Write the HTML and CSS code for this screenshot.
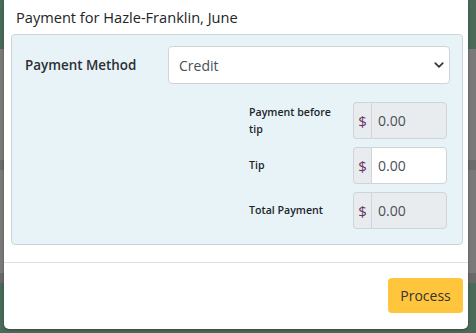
FILE: index.html
```html
<!DOCTYPE html>
<html lang="en">

<head>
    <meta charset="UTF-8">
    <meta name="viewport" content="width=device-width, initial-scale=1.0">
    <title>Payment</title>
    <link rel="stylesheet" href="styles.css">
</head>

<body>
    <div class="modal">
        <div class="modal-header">
            <h5 class="modal-title">Payment for Hazle-Franklin, June</h5>
        </div>
        <div class="modal-body">
            <div class="pay-panel">
                <div class="method-row">
                    <label for="method">Payment Method</label>
                    <div class="select-wrap">
                        <select id="method" class="form-select">
                            <option>Credit</option>
                            <option>Cash</option>
                            <option>Check</option>
                        </select>
                        <svg class="chevron" width="10" height="10" viewBox="0 0 16 16">
                            <path d="M2 5l6 6 6-6" fill="none" stroke="#343a40" stroke-width="2.8" stroke-linecap="round" stroke-linejoin="round" />
                        </svg>
                    </div>
                </div>
                <div class="amounts">
                    <label class="amount-label">Payment before tip</label>
                    <div class="input-group">
                        <span class="addon">$</span>
                        <input type="text" value="0.00" disabled>
                    </div>
                    <label class="amount-label">Tip</label>
                    <div class="input-group">
                        <span class="addon">$</span>
                        <input type="text" value="0.00">
                    </div>
                    <label class="amount-label">Total Payment</label>
                    <div class="input-group">
                        <span class="addon">$</span>
                        <input type="text" value="0.00" disabled>
                    </div>
                </div>
            </div>
        </div>
        <div class="modal-footer">
            <button type="button" class="btn-process">Process</button>
        </div>
    </div>
</body>

</html>
```

FILE: styles.css
```css
body {
    margin: 0;
    padding: 0;
    height: 333px;
    overflow: hidden;
    font-family: "Open Sans", "Noto Sans", sans-serif;
    color: #212529;
    background: linear-gradient(to bottom,
        #4b6b5a 0, #4b6b5a 49px,
        #7a7a7a 49px, #7a7a7a 160px,
        #6c6c6c 160px, #6c6c6c 170px,
        #7a7a7a 170px, #7a7a7a 273px,
        #6a6a6a 273px, #6a6a6a 283px,
        #4b6b5a 283px);
}

.modal {
    margin-left: 4px;
    width: 464px;
    height: 329px;
    background-color: white;
    border-radius: 0 0 5px 5px;
    box-shadow: 0 1px 3px rgba(0, 0, 0, 0.35);
    display: flex;
    flex-direction: column;
}

.modal-header {
    padding: 7px 12px 0 12px;
    height: 27px;
}

.modal-title {
    margin: 0;
    font-size: 14.6px;
    font-weight: 400;
    line-height: 20px;
}

.modal-body {
    padding: 0 5px 0 7px;
    height: 228px;
    border-bottom: 1px solid #dee2e6;
}

.pay-panel {
    background-color: #e8f3f8;
    border: 1px solid #c9d6dc;
    border-radius: 4px;
    padding: 11px 12px 15px 12px;
}

.method-row {
    display: grid;
    grid-template-columns: 144px 1fr;
    align-items: center;
}

.method-row label {
    font-size: 13.4px;
    font-weight: 600;
    color: #2b2f33;
    padding-left: 1px;
}

.select-wrap {
    position: relative;
}

.form-select {
    display: block;
    width: 100%;
    height: 38px;
    padding: 0 30px 0 10px;
    font-family: inherit;
    font-size: 14px;
    color: #495057;
    background-color: white;
    border: 1px solid #ced4da;
    border-radius: 4px;
    appearance: none;
    -webkit-appearance: none;
}

.chevron {
    position: absolute;
    right: 6px;
    top: 14px;
}

.amounts {
    display: grid;
    grid-template-columns: 104px 94px;
    row-gap: 8px;
    align-items: center;
    justify-content: end;
    margin-top: 18px;
    margin-right: 3px;
}

.amount-label {
    font-size: 10.6px;
    font-weight: 600;
    line-height: 17px;
    padding-right: 14px;
}

.input-group {
    display: flex;
    height: 37px;
}

.addon {
    display: flex;
    align-items: center;
    justify-content: center;
    width: 17px;
    background-color: #e9ecef;
    border: 1px solid #ced4da;
    border-right: none;
    border-radius: 4px 0 0 4px;
    color: #6a3362;
    font-size: 15px;
}

.input-group input {
    flex: 1;
    min-width: 0;
    padding: 0 6px;
    font-family: inherit;
    font-size: 14px;
    color: #495057;
    background-color: white;
    border: 1px solid #ced4da;
    border-radius: 0 4px 4px 0;
}

.input-group input:disabled {
    background-color: #e9ecef;
}

.modal-footer {
    display: flex;
    justify-content: flex-end;
    padding: 15px 5px 0 0;
}

.btn-process {
    width: 75px;
    height: 35px;
    border: none;
    border-radius: 4px;
    background-color: #ffc53d;
    color: #343434;
    font-family: inherit;
    font-size: 14px;
    cursor: pointer;
}
```
